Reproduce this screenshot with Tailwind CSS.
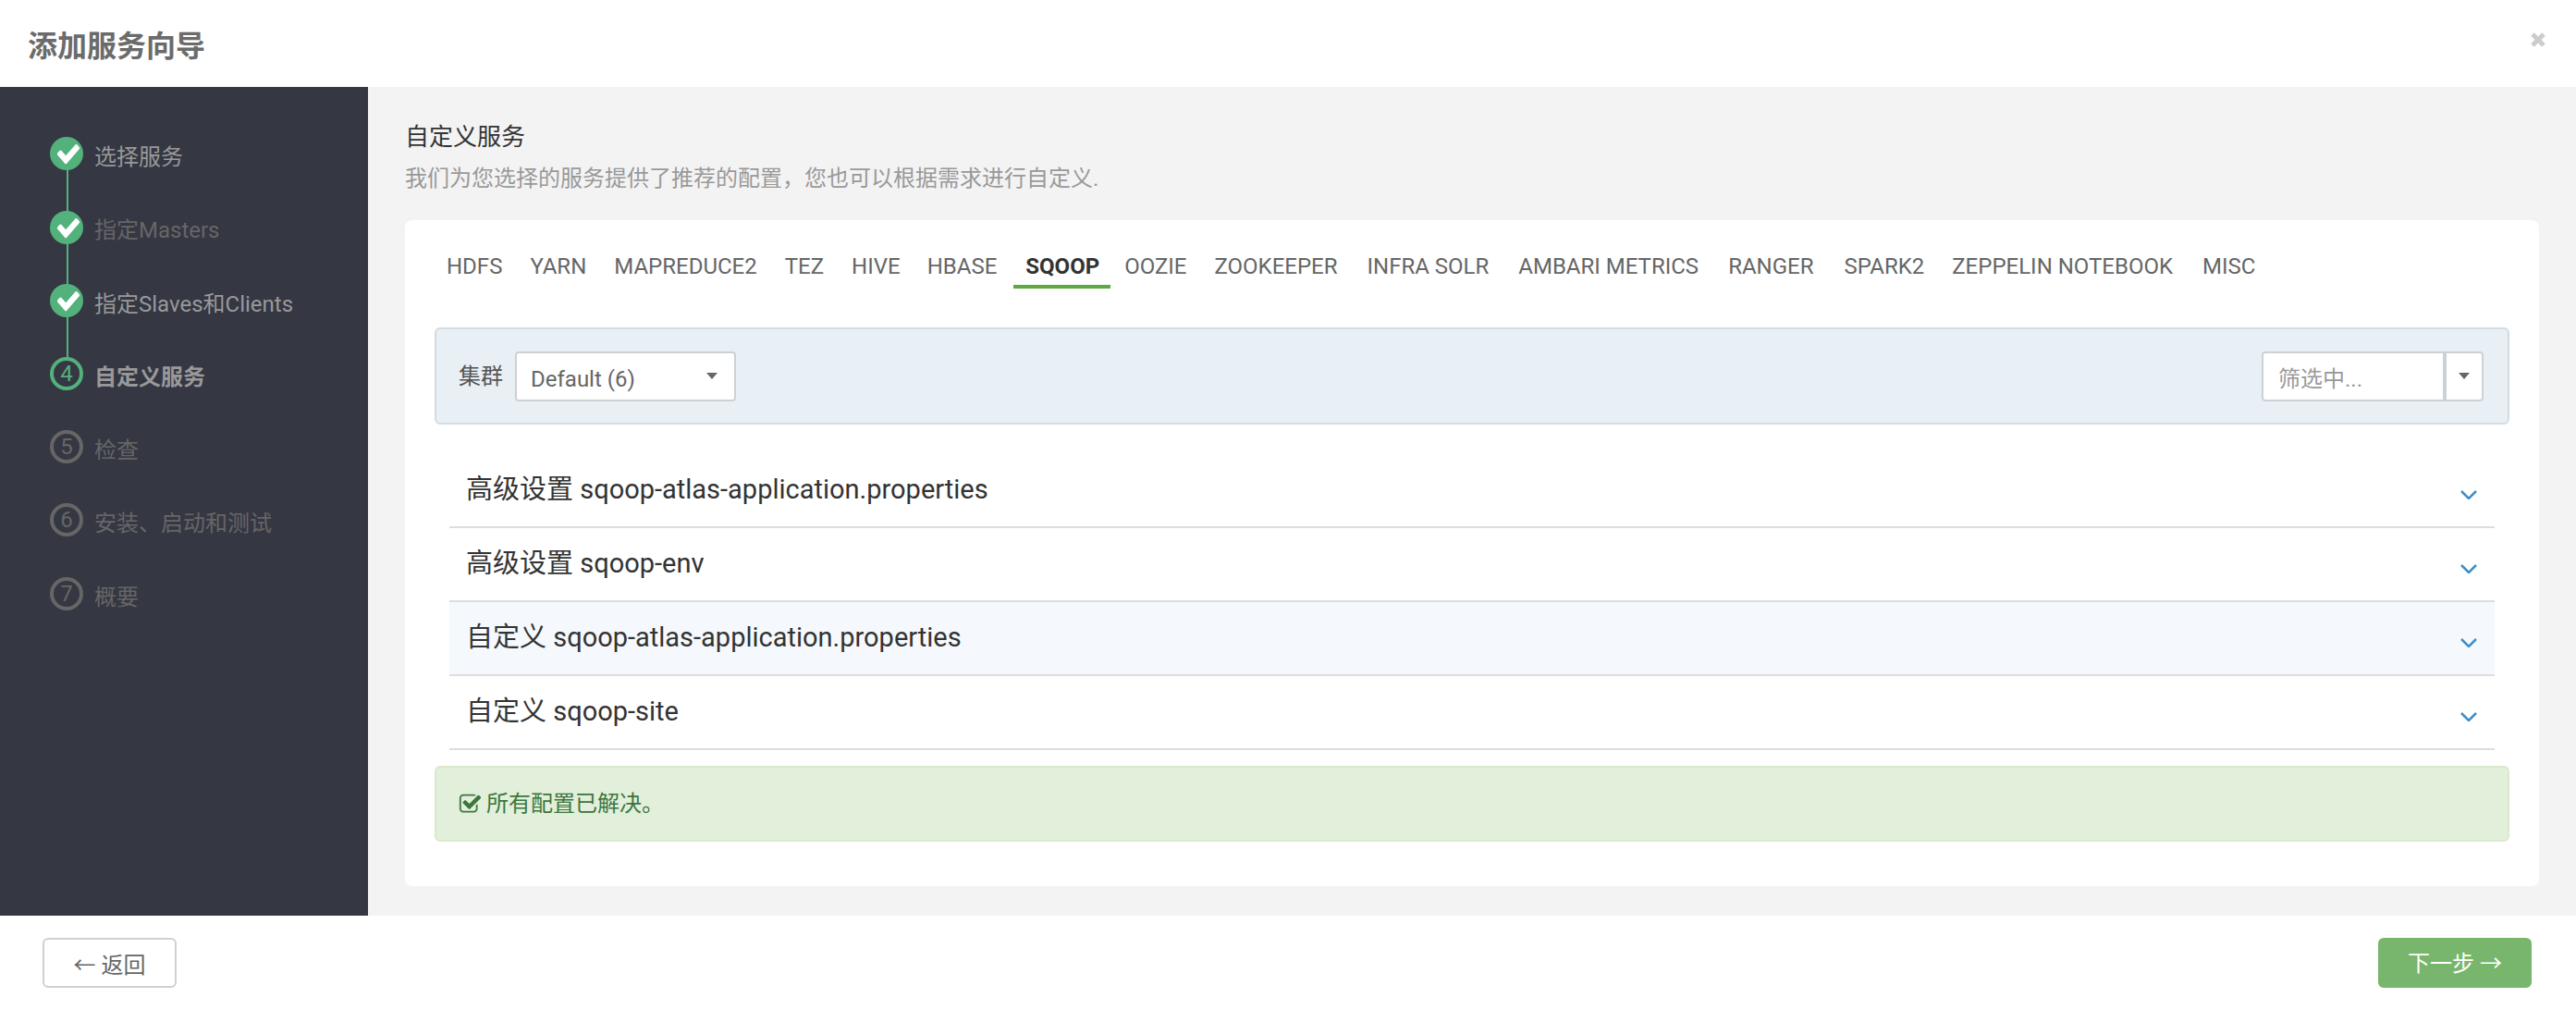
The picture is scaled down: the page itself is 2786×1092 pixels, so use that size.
<!DOCTYPE html>
<html lang="zh-CN">
<head>
  <meta charset="UTF-8" />
  <title>添加服务向导</title>
  <script src="https://cdn.jsdelivr.net/npm/@tailwindcss/browser@4"></script>
</head>
<body class="h-[1092px] overflow-hidden bg-white text-[24px] text-[#666] font-['Roboto','Noto_Sans_CJK_SC',sans-serif]">
  <!-- header -->
  <header class="h-[94px] flex items-center justify-between pl-[30px] pr-[33px]">
    <h1 class="text-[32px] font-bold text-[#6b6b6b] leading-none pt-[6px]">添加服务向导</h1>
    <svg class="w-4 h-4 mb-[8px]" viewBox="0 0 16 16"><path d="M2 2L14 14M14 2L2 14" stroke="#ccc" stroke-width="5" /></svg>
  </header>

  <div class="flex h-[896px]">
    <!-- wizard steps -->
    <aside class="w-[398px] shrink-0 bg-[#353743] pt-[54px] pl-[54px]">
      <ol class="flex flex-col">
        <li class="relative h-[80px] flex items-start gap-[12px] text-[#999]">
          <span class="absolute left-[18px] top-[30px] w-[2px] h-[60px] bg-[#53b17b]"></span>
          <span class="relative w-9 h-9 rounded-full bg-[#53b17b] flex items-center justify-center"><svg class="w-7 h-8 ml-[3px]" viewBox="0 0 1792 1792" preserveAspectRatio="none" fill="#fff"><path d="M1671 566q0 40-28 68l-724 724-136 136q-28 28-68 28t-68-28l-136-136-362-362q-28-28-28-68t28-68l136-136q28-28 68-28t68 28l294 295 656-657q28-28 68-28t68 28l136 136q28 28 28 68z"/></svg></span>
          <span class="leading-[44px]">选择服务</span>
        </li>
        <li class="relative h-[79px] flex items-start gap-[12px] text-[#666]">
          <span class="absolute left-[18px] top-[30px] w-[2px] h-[60px] bg-[#53b17b]"></span>
          <span class="relative w-9 h-9 rounded-full bg-[#53b17b] flex items-center justify-center"><svg class="w-7 h-8 ml-[3px]" viewBox="0 0 1792 1792" preserveAspectRatio="none" fill="#fff"><path d="M1671 566q0 40-28 68l-724 724-136 136q-28 28-68 28t-68-28l-136-136-362-362q-28-28-28-68t28-68l136-136q28-28 68-28t68 28l294 295 656-657q28-28 68-28t68 28l136 136q28 28 28 68z"/></svg></span>
          <span class="leading-[42px]">指定Masters</span>
        </li>
        <li class="relative h-[79px] flex items-start gap-[12px] text-[#999]">
          <span class="absolute left-[18px] top-[30px] w-[2px] h-[60px] bg-[#53b17b]"></span>
          <span class="relative w-9 h-9 rounded-full bg-[#53b17b] flex items-center justify-center"><svg class="w-7 h-8 ml-[3px]" viewBox="0 0 1792 1792" preserveAspectRatio="none" fill="#fff"><path d="M1671 566q0 40-28 68l-724 724-136 136q-28 28-68 28t-68-28l-136-136-362-362q-28-28-28-68t28-68l136-136q28-28 68-28t68 28l294 295 656-657q28-28 68-28t68 28l136 136q28 28 28 68z"/></svg></span>
          <span class="leading-[44px]">指定Slaves和Clients</span>
        </li>
        <li class="relative h-[79px] flex items-start gap-[12px] text-[#999]">
          <span class="relative w-9 h-9 rounded-full border-4 border-[#53b17b] bg-[#353743] text-[#53b17b] flex items-center justify-center leading-none">4</span>
          <span class="leading-[44px] font-bold">自定义服务</span>
        </li>
        <li class="h-[79px] flex items-start gap-[12px]">
          <span class="w-9 h-9 rounded-full border-4 border-[#666] flex items-center justify-center leading-none">5</span>
          <span class="leading-[44px]">检查</span>
        </li>
        <li class="h-[80px] flex items-start gap-[12px]">
          <span class="w-9 h-9 rounded-full border-4 border-[#666] flex items-center justify-center leading-none">6</span>
          <span class="leading-[44px]">安装、启动和测试</span>
        </li>
        <li class="h-[79px] flex items-start gap-[12px]">
          <span class="w-9 h-9 rounded-full border-4 border-[#666] flex items-center justify-center leading-none">7</span>
          <span class="leading-[44px]">概要</span>
        </li>
      </ol>
    </aside>

    <!-- main -->
    <main class="flex-1 bg-[#f3f3f3] px-[40px] pt-[36px]">
      <h2 class="text-[26px] leading-[36px] text-[#333]">自定义服务</h2>
      <p class="mt-[9px] leading-[36px] text-[#999]">我们为您选择的服务提供了推荐的配置，您也可以根据需求进行自定义.</p>

      <section class="mt-[27px] h-[720px] bg-white rounded-[8px] px-[32px] pt-[24px]">
        <nav class="flex gap-[6px] h-[50px] pl-[1px] leading-[52px]">
          <span class="px-[12px]">HDFS</span>
          <span class="px-[12px]">YARN</span>
          <span class="px-[12px]">MAPREDUCE2</span>
          <span class="px-[12px]">TEZ</span>
          <span class="px-[12px]">HIVE</span>
          <span class="pl-[11px] pr-[12px]">HBASE</span>
          <span class="pl-[13px] pr-[12px] border-b-4 border-[#5ca93f] font-bold text-[#333]">SQOOP</span>
          <span class="pl-[9px] pr-[12px]">OOZIE</span>
          <span class="px-[12px]">ZOOKEEPER</span>
          <span class="pl-[14px] pr-[12px]">INFRA SOLR</span>
          <span class="pl-[14px] pr-[12px]">AMBARI METRICS</span>
          <span class="pl-[14px] pr-[12px]">RANGER</span>
          <span class="pl-[15px] pr-[12px]">SPARK2</span>
          <span class="px-[12px]">ZEPPELIN NOTEBOOK</span>
          <span class="pl-[14px] pr-[12px]">MISC</span>
        </nav>

        <!-- filter bar -->
        <div class="mt-[42px] h-[105px] flex items-center justify-between bg-[#e8eff5] border-2 border-[#d3dce3] rounded-[6px] pl-[24px] pr-[26px]">
          <div class="flex items-center gap-[13px]">
            <span class="text-[#555]">集群</span>
            <div class="w-[239px] h-[54px] flex items-center justify-between bg-white border-2 border-[#ccd1d6] rounded-[4px] pl-[15px] pr-[18px]">
              <span class="pt-[6px]">Default (6)</span>
              <span class="w-0 h-0 border-x-[6px] border-x-transparent border-t-[7px] border-t-[#666]"></span>
            </div>
          </div>
          <div class="w-[240px] h-[54px] flex bg-white border-2 border-[#ccd1d6] rounded-[4px]">
            <span class="flex-1 pl-[16px] leading-[56px] text-[#999] border-r-4 border-[#ccd1d6]">筛选中...</span>
            <span class="w-[38px] flex items-center justify-center"><span class="w-0 h-0 border-x-[6px] border-x-transparent border-t-[7px] border-t-[#666]"></span></span>
          </div>
        </div>

        <!-- config sections -->
        <div class="mt-[32px] mx-[16px] text-[29px] text-[#333]">
          <div class="h-[80px] flex items-center justify-between pl-[18px] pr-[19px] border-b-2 border-[#ddd]">
            <span>高级设置 sqoop-atlas-application.properties</span>
            <svg class="w-[18px] h-[10px] mt-[10px]" viewBox="0 0 18 10" fill="none"><path d="M1 1L9 9L17 1" stroke="#3d8fc6" stroke-width="2.5" /></svg>
          </div>
          <div class="h-[80px] flex items-center justify-between pl-[18px] pr-[19px] border-b-2 border-[#ddd]">
            <span>高级设置 sqoop-env</span>
            <svg class="w-[18px] h-[10px] mt-[10px]" viewBox="0 0 18 10" fill="none"><path d="M1 1L9 9L17 1" stroke="#3d8fc6" stroke-width="2.5" /></svg>
          </div>
          <div class="h-[80px] flex items-center justify-between pl-[18px] pr-[19px] border-b-2 border-[#ddd] bg-[#f5f9fd]">
            <span>自定义 sqoop-atlas-application.properties</span>
            <svg class="w-[18px] h-[10px] mt-[10px]" viewBox="0 0 18 10" fill="none"><path d="M1 1L9 9L17 1" stroke="#3d8fc6" stroke-width="2.5" /></svg>
          </div>
          <div class="h-[80px] flex items-center justify-between pl-[18px] pr-[19px] border-b-2 border-[#ddd]">
            <span>自定义 sqoop-site</span>
            <svg class="w-[18px] h-[10px] mt-[10px]" viewBox="0 0 18 10" fill="none"><path d="M1 1L9 9L17 1" stroke="#3d8fc6" stroke-width="2.5" /></svg>
          </div>
        </div>

        <!-- status -->
        <div class="mt-[17px] h-[82px] flex items-center gap-[5px] bg-[#e2efda] border-2 border-[#dbe9cd] rounded-[6px] pl-[24px] text-[#3c763d]">
          <svg class="w-[25px] h-[25px]" viewBox="0 0 1792 1792" fill="#3c763d"><path d="M1472 930v318q0 119-84.5 203.5t-203.5 84.5h-832q-119 0-203.5-84.5t-84.5-203.5v-832q0-119 84.5-203.5t203.5-84.5h832q63 0 117 25 15 7 18 23 3 17-9 29l-49 49q-10 10-23 10-3 0-9-2-23-6-45-6h-832q-66 0-113 47t-47 113v832q0 66 47 113t113 47h832q66 0 113-47t47-113v-254q0-13 9-22l64-64q10-10 23-10 6 0 12 3 20 8 20 29zm231-489l-814 814q-24 24-57 24t-57-24l-430-430q-24-24-24-57t24-57l110-110q24-24 57-24t57 24l263 263 647-647q24-24 57-24t57 24l110 110q24 24 24 57t-24 57z"/></svg>
          <span>所有配置已解决。</span>
        </div>
      </section>
    </main>
  </div>

  <!-- footer -->
  <footer class="h-[102px] flex items-center justify-between pl-[46px] pr-[48px]">
    <button class="w-[145px] h-[54px] pt-[6px] border-2 border-[#ccd1d6] rounded-[6px] text-[#666]">← 返回</button>
    <button class="w-[166px] h-[54px] pt-[2px] rounded-[6px] bg-[#77b66c] text-white">下一步 →</button>
  </footer>
</body>
</html>
